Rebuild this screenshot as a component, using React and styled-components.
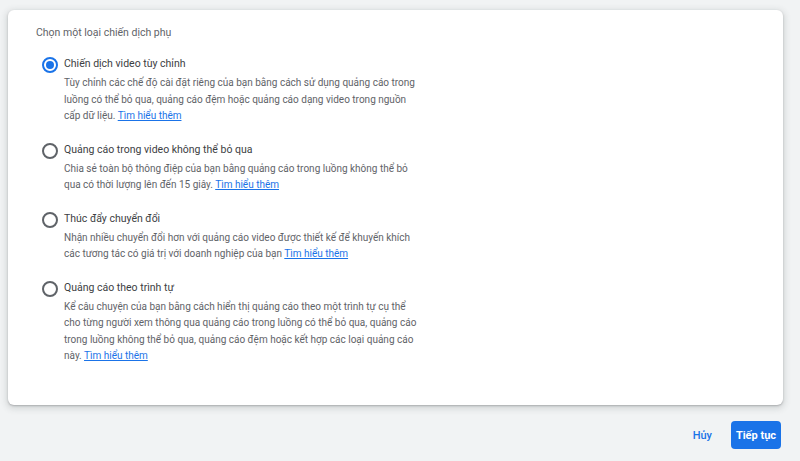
import React, { useState } from 'react';
import styled, { createGlobalStyle } from 'styled-components';

const GlobalStyle = createGlobalStyle`
  html, body {
    margin: 0;
    padding: 0;
    background: #f1f3f4;
    font-family: Roboto, "Noto Sans", Arial, sans-serif;
  }
`;

const options = [
  {
    id: 'custom',
    title: 'Chiến dịch video tùy chỉnh',
    text: 'Tùy chỉnh các chế độ cài đặt riêng của bạn bằng cách sử dụng quảng cáo trong luồng có thể bỏ qua, quảng cáo đệm hoặc quảng cáo dạng video trong nguồn cấp dữ liệu.',
  },
  {
    id: 'nonskip',
    title: 'Quảng cáo trong video không thể bỏ qua',
    text: 'Chia sẻ toàn bộ thông điệp của bạn bằng quảng cáo trong luồng không thể bỏ qua có thời lượng lên đến 15 giây.',
  },
  {
    id: 'conversions',
    title: 'Thúc đẩy chuyển đổi',
    text: 'Nhận nhiều chuyển đổi hơn với quảng cáo video được thiết kế để khuyến khích các tương tác có giá trị với doanh nghiệp của bạn',
  },
  {
    id: 'sequence',
    title: 'Quảng cáo theo trình tự',
    text: 'Kể câu chuyện của bạn bằng cách hiển thị quảng cáo theo một trình tự cụ thể cho từng người xem thông qua quảng cáo trong luồng có thể bỏ qua, quảng cáo trong luồng không thể bỏ qua, quảng cáo đệm hoặc kết hợp các loại quảng cáo này.',
  },
];

function App() {
  const [selected, setSelected] = useState('custom');

  return (
    <Page>
      <GlobalStyle />
      <Card>
        <Heading>Chọn một loại chiến dịch phụ</Heading>
        <OptionList>
          {options.map((opt) => (
            <Option key={opt.id} onClick={() => setSelected(opt.id)}>
              <Radio $checked={selected === opt.id} />
              <OptionBody>
                <OptionTitle>{opt.title}</OptionTitle>
                <OptionText>
                  {opt.text} <Link href="#">Tìm hiểu thêm</Link>
                </OptionText>
              </OptionBody>
            </Option>
          ))}
        </OptionList>
      </Card>
      <Footer>
        <TextButton>Hủy</TextButton>
        <PrimaryButton>Tiếp tục</PrimaryButton>
      </Footer>
    </Page>
  );
}

const Page = styled.div`
  width: 800px;
  height: 461px;
  box-sizing: border-box;
  padding: 10px 17px 0 8px;
  overflow: hidden;
`;

const Card = styled.div`
  background: #fff;
  border-radius: 6px;
  height: 395px;
  box-sizing: border-box;
  padding: 14px 28px 0;
  box-shadow: 0 1px 2px rgba(60, 64, 67, 0.3), 0 2px 6px 2px rgba(60, 64, 67, 0.15);
`;

const Heading = styled.div`
  font-size: 10.5px;
  line-height: 18px;
  color: #5f6368;
`;

const OptionList = styled.div`
  display: flex;
  flex-direction: column;
  gap: 16px;
  margin-top: 13px;
`;

const Option = styled.div`
  display: flex;
  align-items: flex-start;
  gap: 6px;
  padding-left: 6px;
  cursor: pointer;
`;

const Radio = styled.span`
  flex: none;
  width: 16px;
  height: 16px;
  margin-top: 2px;
  box-sizing: border-box;
  border-radius: 50%;
  border: 2px solid ${(p) => (p.$checked ? '#1a73e8' : '#5f6368')};
  display: flex;
  align-items: center;
  justify-content: center;
  &::after {
    content: '';
    width: 8px;
    height: 8px;
    border-radius: 50%;
    background: ${(p) => (p.$checked ? '#1a73e8' : 'transparent')};
  }
`;

const OptionBody = styled.div`
  width: 354px;
`;

const OptionTitle = styled.div`
  font-size: 10.5px;
  line-height: 18px;
  color: #3c4043;
`;

const OptionText = styled.div`
  margin-top: 2px;
  font-size: 10px;
  line-height: 16.5px;
  color: #5f6368;
`;

const Link = styled.a`
  color: #1a73e8;
  text-decoration: underline;
`;

const Footer = styled.div`
  display: flex;
  justify-content: flex-end;
  align-items: center;
  gap: 10px;
  margin-top: 16px;
  padding-right: 2px;
`;

const TextButton = styled.button`
  background: none;
  border: none;
  padding: 0 9px;
  height: 28px;
  font-family: inherit;
  font-size: 11px;
  font-weight: 500;
  color: #1a73e8;
  cursor: pointer;
`;

const PrimaryButton = styled.button`
  background: #1a73e8;
  border: none;
  border-radius: 4px;
  width: 50px;
  height: 28px;
  padding: 0;
  font-family: inherit;
  font-size: 11px;
  font-weight: 700;
  color: #fff;
  cursor: pointer;
`;

export default App;
